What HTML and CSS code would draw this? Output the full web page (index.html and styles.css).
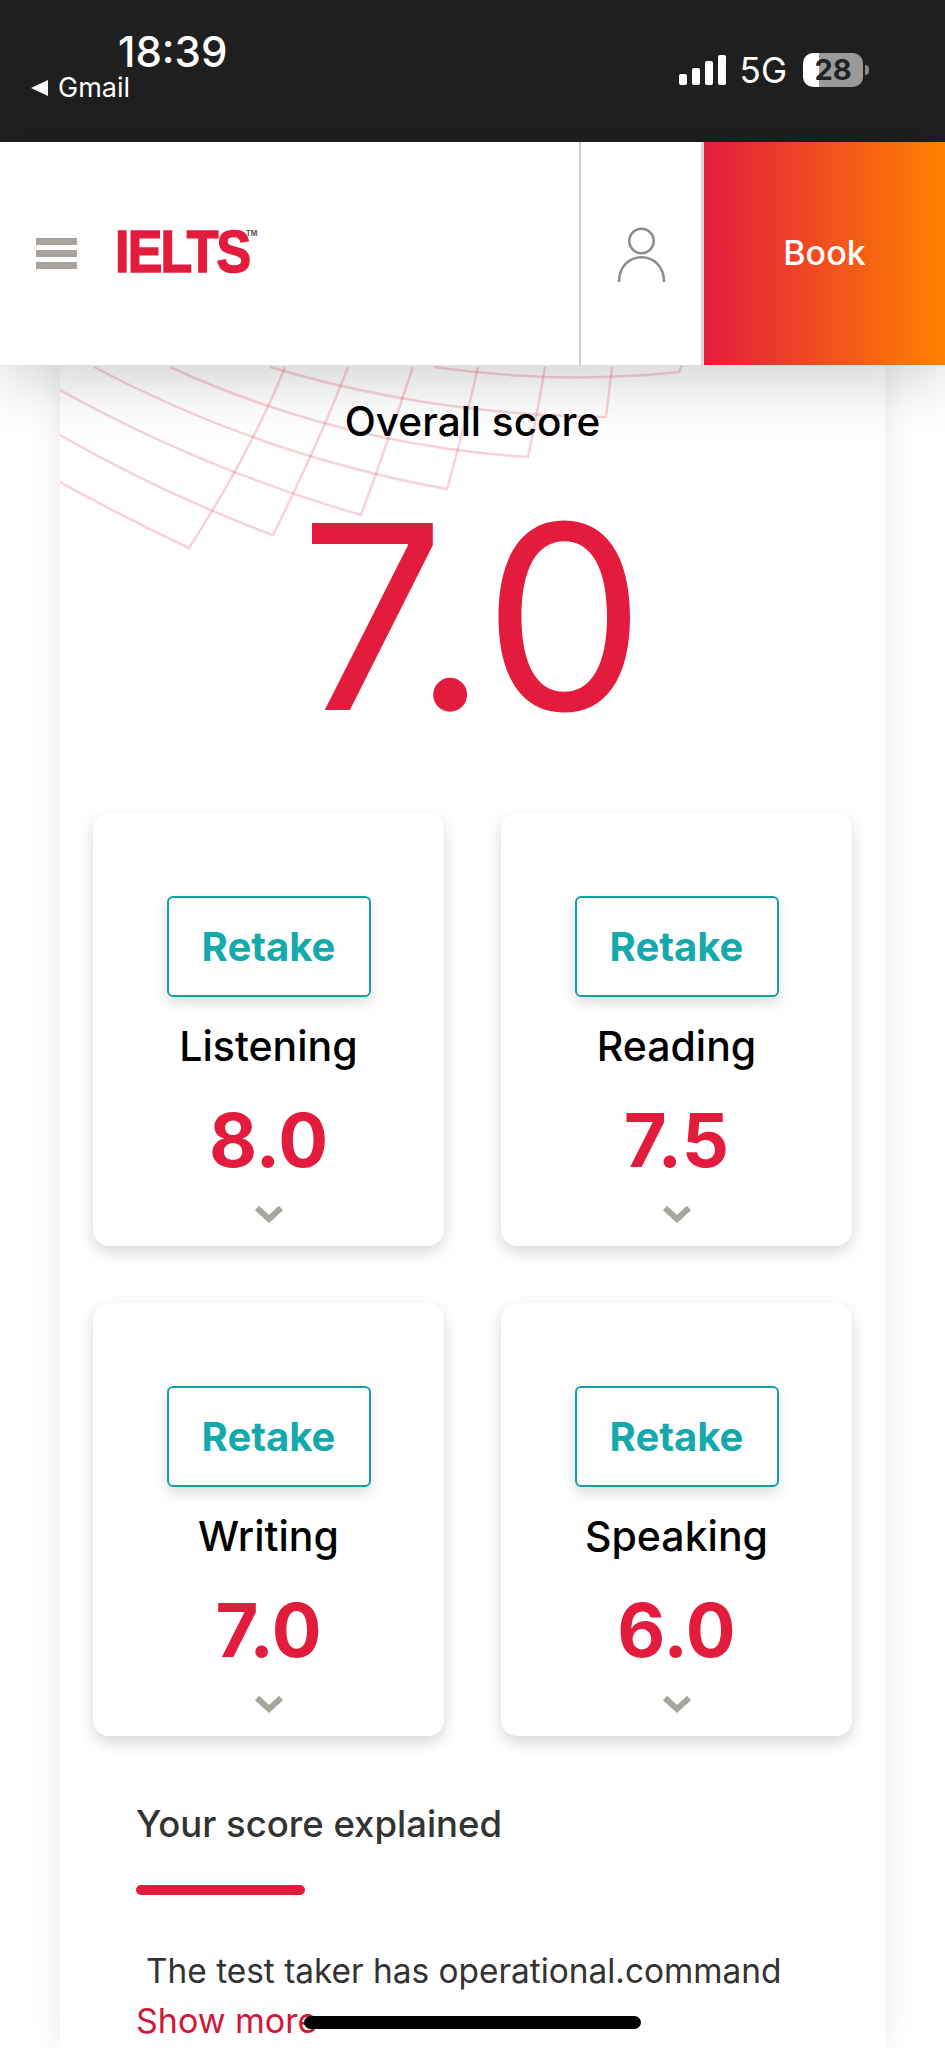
FILE: index.html
```html
<!DOCTYPE html>
<html lang="en">
<head>
    <meta charset="UTF-8">
    <meta name="viewport" content="width=device-width, initial-scale=1.0">
    <title>IELTS score</title>
    <link rel="stylesheet" href="styles.css">
</head>
<body>
    <div class="status-bar">
        <div class="status-left">
            <div class="status-time">18:39</div>
            <div class="status-back"><span class="back-arrow"></span>Gmail</div>
        </div>
        <div class="status-right">
            <div class="signal">
                <span class="signal-bar bar-1"></span>
                <span class="signal-bar bar-2"></span>
                <span class="signal-bar bar-3"></span>
                <span class="signal-bar bar-4"></span>
            </div>
            <span class="network">5G</span>
            <span class="battery">28</span>
            <span class="battery-nub"></span>
        </div>
    </div>

    <header class="site-header">
        <div class="menu-icon">
            <span></span>
            <span></span>
            <span></span>
        </div>
        <div class="logo"><span class="logo-text">IELTS</span><span class="logo-tm">TM</span></div>
        <div class="account">
            <svg width="49" height="58" viewBox="0 0 49 58" fill="none" stroke="#8c8c8c" stroke-width="2.6">
                <circle cx="24.5" cy="16" r="12.2"/>
                <path d="M2 57 C2 24 47 24 47 57"/>
            </svg>
        </div>
        <a class="book-button">Book</a>
    </header>

    <main class="panel">
        <svg class="panel-pattern" viewBox="60 365 825 200" width="825" height="200" fill="none" stroke="#e31c3d" stroke-opacity="0.2" stroke-width="2.5">
            <path d="M60 482 Q125 518 189 548 Q252 450 285 367"/>
            <path d="M60 435 Q165 495 273 535 Q320 440 348 367"/>
            <path d="M60 390 Q205 470 361 515 Q392 430 413 367"/>
            <path d="M94 367 Q260 455 447 489 Q465 425 478 367"/>
            <path d="M170 367 Q340 445 528 457 Q538 410 545 367"/>
            <path d="M270 367 Q430 415 606 417 L612 367"/>
            <path d="M434 367 Q560 385 679 372 L682 365"/>
        </svg>

        <h1 class="overall-title">Overall score</h1>
        <div class="overall-score"><span class="kern-seven">7</span><span class="kern-dot">.</span>0</div>

        <div class="score-grid">
            <div class="score-card">
                <a class="retake">Retake</a>
                <div class="skill">Listening</div>
                <div class="skill-score">8.0</div>
                <svg class="chevron" width="30" height="20" viewBox="0 0 30 20" fill="none" stroke="#a8a49e" stroke-width="6"><path d="M3 3 L15 14 L27 3"/></svg>
            </div>
            <div class="score-card">
                <a class="retake">Retake</a>
                <div class="skill">Reading</div>
                <div class="skill-score">7.5</div>
                <svg class="chevron" width="30" height="20" viewBox="0 0 30 20" fill="none" stroke="#a8a49e" stroke-width="6"><path d="M3 3 L15 14 L27 3"/></svg>
            </div>
            <div class="score-card">
                <a class="retake">Retake</a>
                <div class="skill">Writing</div>
                <div class="skill-score">7.0</div>
                <svg class="chevron" width="30" height="20" viewBox="0 0 30 20" fill="none" stroke="#a8a49e" stroke-width="6"><path d="M3 3 L15 14 L27 3"/></svg>
            </div>
            <div class="score-card">
                <a class="retake">Retake</a>
                <div class="skill">Speaking</div>
                <div class="skill-score">6.0</div>
                <svg class="chevron" width="30" height="20" viewBox="0 0 30 20" fill="none" stroke="#a8a49e" stroke-width="6"><path d="M3 3 L15 14 L27 3"/></svg>
            </div>
        </div>

        <section class="explained">
            <h2>Your score explained</h2>
            <div class="red-rule"></div>
            <p>The test taker has operational.command</p>
            <a class="show-more">Show more</a>
        </section>
    </main>

    <div class="home-indicator"></div>
</body>
</html>
```

FILE: styles.css
```css
html, body {
    margin: 0;
    padding: 0;
    height: 2048px;
    overflow: hidden;
}
body {
    position: relative;
    font-family: Inter, "Noto Sans", sans-serif;
    background-color: #fff;
}

/* phone status bar */
.status-bar {
    height: 142px;
    background-color: #1f1f1f;
    color: #fff;
    display: flex;
    justify-content: space-between;
    align-items: flex-start;
    box-sizing: border-box;
    padding: 30px 76px 0 31px;
}
.status-time {
    font-size: 42px;
    line-height: 44px;
    font-weight: 500;
    margin-left: 87px;
}
.status-back {
    display: flex;
    align-items: center;
    gap: 10px;
    font-size: 27px;
    line-height: 32px;
    margin-top: -2px;
}
.back-arrow {
    width: 0;
    height: 0;
    border-top: 8px solid transparent;
    border-bottom: 8px solid transparent;
    border-right: 17px solid #fff;
}
.status-right {
    display: flex;
    align-items: center;
    margin-top: 23px;
}
.signal {
    display: flex;
    align-items: flex-end;
    gap: 5px;
    height: 30px;
}
.signal-bar {
    width: 8px;
    background-color: #fff;
    border-radius: 2px;
}
.bar-1 { height: 11px; }
.bar-2 { height: 17px; }
.bar-3 { height: 24px; }
.bar-4 { height: 30px; }
.network {
    font-size: 35px;
    line-height: 34px;
    margin-left: 14px;
}
.battery {
    width: 60px;
    height: 34px;
    margin-left: 16px;
    border-radius: 10px;
    background: linear-gradient(90deg, #fff 27%, #9a9a9a 27%);
    color: #222;
    font-size: 29px;
    font-weight: 700;
    line-height: 34px;
    text-align: center;
}
.battery-nub {
    width: 4px;
    height: 10px;
    margin-left: 2px;
    background-color: #8a8a8a;
    border-radius: 0 4px 4px 0;
}

/* site header */
.site-header {
    position: relative;
    z-index: 2;
    height: 223px;
    display: flex;
    align-items: center;
    background-color: #fff;
    box-shadow: 0 12px 60px rgba(0, 0, 0, 0.2);
}
.menu-icon {
    display: flex;
    flex-direction: column;
    gap: 5px;
    margin-left: 36px;
    width: 41px;
}
.menu-icon span {
    height: 7px;
    background-color: #a8a39c;
}
.logo {
    display: flex;
    align-items: flex-start;
    margin-left: 38px;
    margin-top: -3px;
    color: #e31c3d;
}
.logo-text {
    font-family: "Liberation Sans", Arial, sans-serif;
    font-size: 59px;
    line-height: 48px;
    font-weight: 700;
    letter-spacing: -2px;
    width: 131px;
    transform: scaleX(0.88);
    transform-origin: left center;
    -webkit-text-stroke: 1.6px #e31c3d;
}
.logo-tm {
    font-size: 7px;
    line-height: 10px;
    font-weight: 700;
    color: #555;
    margin-left: 0;
    margin-top: 1px;
}
.account {
    margin-left: auto;
    align-self: stretch;
    width: 120px;
    display: flex;
    align-items: center;
    justify-content: center;
    border-left: 2px solid #cfcbc7;
    border-right: 3px solid #dcd9d6;
}
.book-button {
    align-self: stretch;
    width: 241px;
    display: flex;
    align-items: center;
    justify-content: center;
    color: #fff;
    font-size: 34px;
    font-weight: 500;
    padding-bottom: 2px;
    box-sizing: border-box;
    background: linear-gradient(90deg, #e31c3d, #ff8200);
}

/* score panel */
.panel {
    position: relative;
    margin: 0 60px;
    height: 1683px;
    background-color: #fff;
    box-shadow: 0 0 30px rgba(0, 0, 0, 0.09);
    box-sizing: border-box;
    padding-top: 33px;
}
.panel-pattern {
    position: absolute;
    top: 0;
    left: 0;
}
.overall-title {
    position: relative;
    margin: 0;
    font-size: 40.5px;
    line-height: 48px;
    font-weight: 500;
    text-align: center;
    color: #000;
}
.overall-score {
    font-size: 257px;
    line-height: 300px;
    text-align: center;
    color: #e31c3d;
    height: 240px;
    margin-top: 21px;
}
.kern-seven {
    letter-spacing: -32px;
}
.kern-dot {
    letter-spacing: -4px;
}
.score-grid {
    display: grid;
    grid-template-columns: 351px 351px;
    column-gap: 57px;
    row-gap: 57px;
    padding: 0 33px;
    margin-top: 106px;
}
.score-card {
    height: 433px;
    box-sizing: border-box;
    padding-top: 83px;
    display: flex;
    flex-direction: column;
    align-items: center;
    background-color: #fff;
    border-radius: 16px;
    box-shadow: 0 6px 16px rgba(0, 0, 0, 0.16);
}
.retake {
    width: 204px;
    height: 101px;
    box-sizing: border-box;
    display: flex;
    align-items: center;
    justify-content: center;
    border: 2px solid #14a0a3;
    border-radius: 6px;
    color: #14a9ac;
    font-size: 40px;
    font-weight: 700;
    box-shadow: 0 6px 14px rgba(0, 0, 0, 0.14);
}
.skill {
    margin-top: 25px;
    font-size: 41px;
    line-height: 48px;
    font-weight: 500;
    color: #000;
}
.skill-score {
    margin-top: 25px;
    font-size: 74px;
    line-height: 90px;
    font-weight: 700;
    color: #e31c3d;
}
.chevron {
    margin-top: 20px;
}

/* explanation text */
.explained {
    padding: 0 76px;
    margin-top: 66px;
}
.explained h2 {
    margin: 0;
    font-size: 36.5px;
    line-height: 44px;
    font-weight: 500;
    color: #333;
}
.red-rule {
    width: 169px;
    height: 10px;
    margin-top: 39px;
    background-color: #e31c3d;
    border-radius: 5px;
}
.explained p {
    margin: 56px 0 0 10px;
    font-size: 33.4px;
    line-height: 40px;
    white-space: nowrap;
    color: #333;
}
.show-more {
    display: block;
    margin-top: 10px;
    font-size: 34px;
    line-height: 40px;
    color: #d0173a;
}

.home-indicator {
    position: absolute;
    left: 304px;
    top: 2016px;
    width: 337px;
    height: 13px;
    background-color: #000;
    border-radius: 7px;
}
```
